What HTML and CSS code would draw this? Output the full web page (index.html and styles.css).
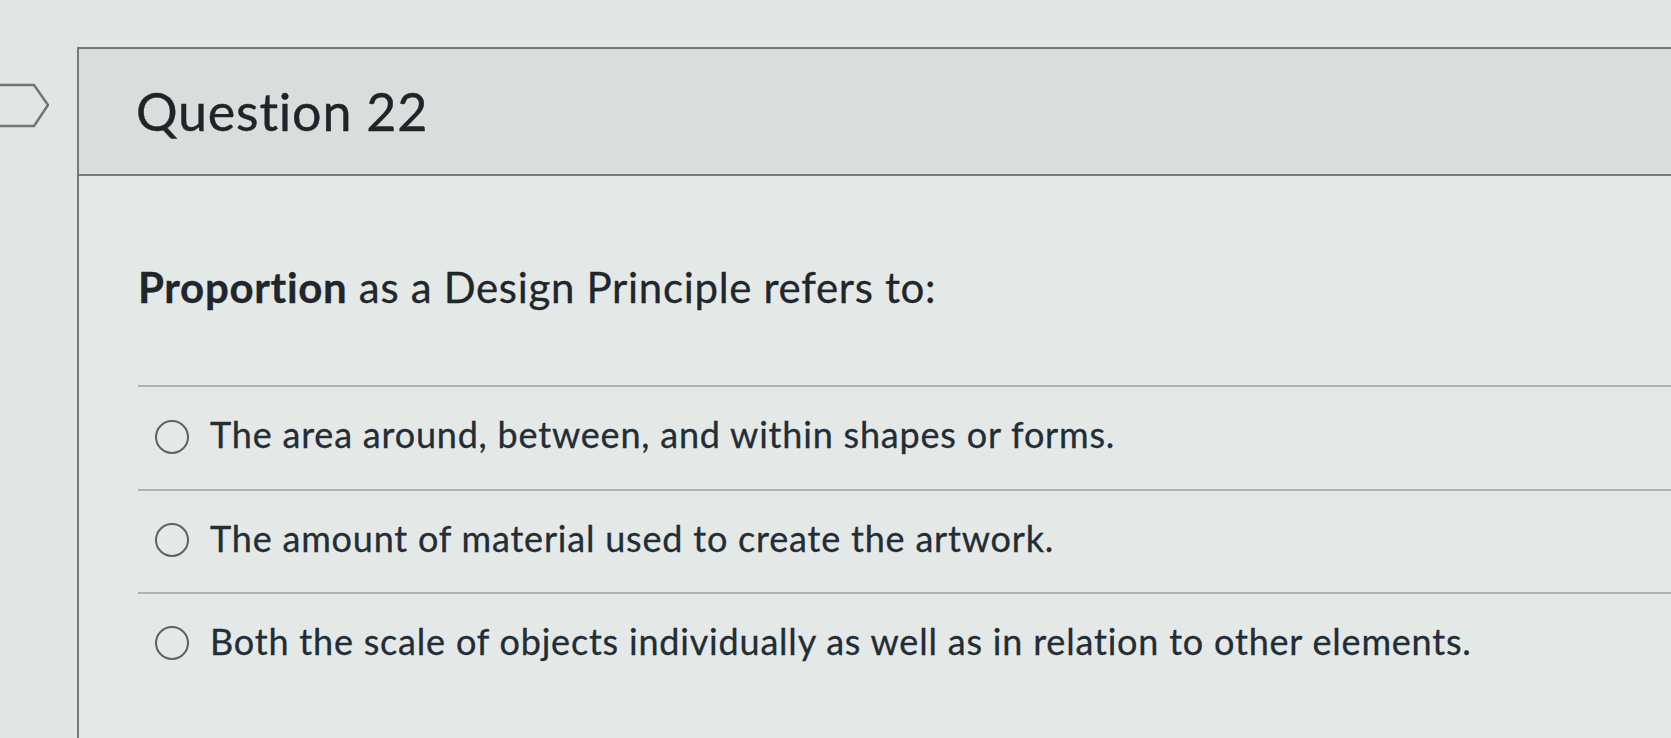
FILE: index.html
```html
<!DOCTYPE html>
<html lang="en">
<head>
<meta charset="utf-8">
<title>Question 22</title>
<link rel="stylesheet" href="styles.css">
</head>
<body>
<div class="page">
  <div class="gutter">
    <svg class="flag" width="52" height="46" viewBox="0 0 52 46" aria-hidden="true">
      <path d="M0 2 H34 L48 22 L34 43 H0" fill="none" stroke="#6f7677" stroke-width="2.4" stroke-linejoin="round"/>
    </svg>
  </div>
  <section class="card">
    <header class="card-header">
      <h2 class="title">Question 22</h2>
    </header>
    <div class="card-body">
      <p class="prompt"><strong>Proportion</strong> as a Design Principle refers to:</p>
      <div class="answers">
        <label class="answer"><span class="radio"></span><span class="answer-text">The area around, between, and within shapes or forms.</span></label>
        <label class="answer"><span class="radio"></span><span class="answer-text">The amount of material used to create the artwork.</span></label>
        <label class="answer"><span class="radio"></span><span class="answer-text">Both the scale of objects individually as well as in relation to other elements.</span></label>
      </div>
    </div>
  </section>
</div>
</body>
</html>
```

FILE: styles.css
```css
html, body {
  margin: 0;
  padding: 0;
}

body {
  background: #e1e5e4;
  font-family: Lato, "Noto Sans", sans-serif;
  color: #26313a;
  overflow: hidden;
  height: 738px;
}

.page {
  display: flex;
  padding-top: 47px;
  height: 691px;
}

.gutter {
  width: 77px;
  flex: none;
}

.flag {
  display: block;
  margin-top: 36px;
}

.card {
  flex: 1;
  border-top: 2px solid #747a7b;
  border-left: 2px solid #747a7b;
  background: #e4e8e7;
}

.card-header {
  height: 125px;
  display: flex;
  align-items: center;
  padding-left: 57px;
  background: #d9dddc;
  border-bottom: 2px solid #777d7e;
}

.title {
  margin: 0;
  font-size: 52px;
  font-weight: 400;
  line-height: 1.2;
  letter-spacing: 0.8px;
  color: #1f2428;
  -webkit-text-stroke: 0.4px #1f2428;
}

.card-body {
  padding: 86px 0 0 59px;
}

.prompt {
  margin: 0 0 73px;
  font-size: 42px;
  line-height: 1.2;
  letter-spacing: 0.68px;
  color: #20262b;
  -webkit-text-stroke: 0.3px #20262b;
}

.prompt strong {
  font-weight: 700;
}

.answer {
  display: flex;
  align-items: center;
  border-top: 2px solid #afb4b3;
  padding: 26px 0 32px 17px;
}

.radio {
  width: 30px;
  height: 30px;
  border: 2px solid #5c6265;
  border-radius: 50%;
  flex: none;
  margin-top: 4px;
  margin-right: 21px;
}

.answer-text {
  font-size: 36px;
  line-height: 1.2;
  letter-spacing: 0.8px;
  color: #232d35;
  -webkit-text-stroke: 0.3px #232d35;
}
```
